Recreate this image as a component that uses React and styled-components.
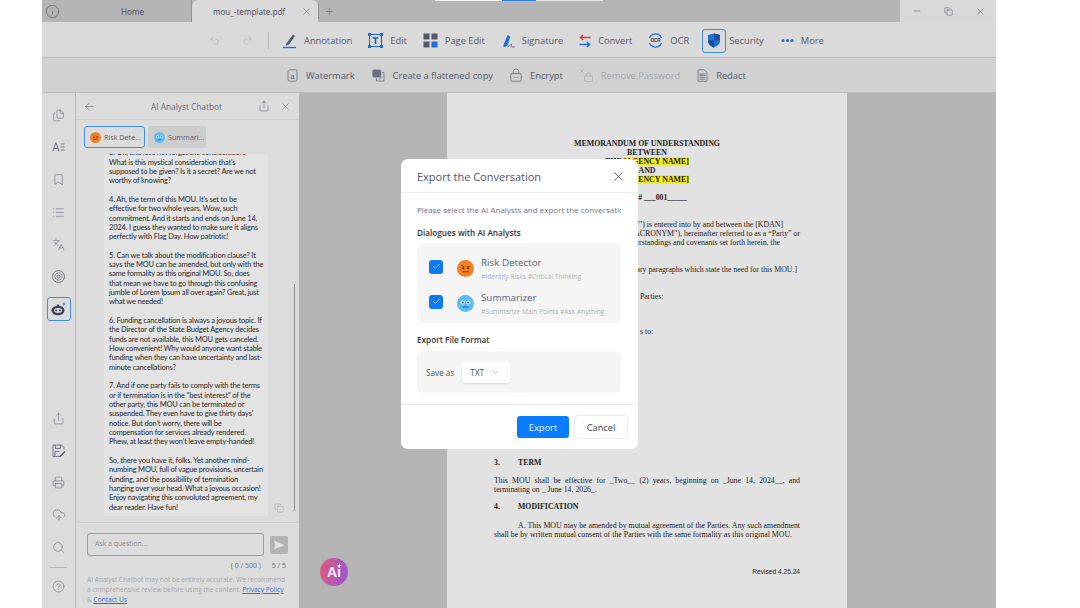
import React from "react";
import styled, { createGlobalStyle } from "styled-components";
import {
  Undo2, Redo2, X, Plus, Minus, Copy, Files, List, Bookmark, Languages, Share, Printer,
  CloudUpload, Search, CircleHelp, ArrowLeft, ChevronDown, Check, Info,
} from "lucide-react";

const GlobalStyle = createGlobalStyle`
  html, body { margin: 0; padding: 0; background: #fff; }
  body { font-family: "Open Sans", "Noto Sans", sans-serif; overflow: hidden; }
  * { box-sizing: border-box; }
`;

const BLUE = "#1f6fd8";

const AnnotationIcon = () => (
  <svg width="15" height="16" viewBox="0 0 15 16">
    <path d="M4 11 L11 1.5 L13 3 L7 11.5 L4 12.5 Z" fill="#54586e" />
    <path d="M1 14.5 H14" stroke={BLUE} strokeWidth="1.4" />
  </svg>
);
const EditIcon = () => (
  <svg width="15" height="15" viewBox="0 0 15 15">
    <rect x="1.5" y="1.5" width="12" height="12" fill="none" stroke={BLUE} strokeWidth="1.1" />
    <rect x="0" y="0" width="3" height="3" fill={BLUE} />
    <rect x="12" y="0" width="3" height="3" fill={BLUE} />
    <rect x="0" y="12" width="3" height="3" fill={BLUE} />
    <rect x="12" y="12" width="3" height="3" fill={BLUE} />
    <path d="M4.5 4.2 H10.5 V5.6 H8.3 V11 H6.7 V5.6 H4.5 Z" fill="#1d4f96" />
  </svg>
);
const PageEditIcon = () => (
  <svg width="15" height="15" viewBox="0 0 15 15">
    <rect x="0.5" y="0.5" width="6" height="6" fill="#54586e" />
    <rect x="8.5" y="0.5" width="6" height="6" fill="#54586e" />
    <rect x="0.5" y="8.5" width="6" height="6" fill="#54586e" />
    <rect x="8.5" y="8.5" width="6" height="6" fill={BLUE} />
  </svg>
);
const SignatureIcon = () => (
  <svg width="12" height="14" viewBox="0 0 12 14">
    <path d="M0.5 11 L4.5 1 L7.3 2.5 L4.3 12 L0.5 13.2 Z" fill={BLUE} />
    <path d="M4.5 13 C7 12.5 7.5 9 8.3 10 C9 11 7.5 13 8.8 13 H11.8" fill="none" stroke="#54586e" strokeWidth="0.8" />
  </svg>
);
const ConvertIcon = () => (
  <svg width="12" height="14" viewBox="0 0 12 14">
    <path d="M11.5 3.5 H2 M4 1 L1.5 3.5 L4 6" fill="none" stroke="#d8413b" strokeWidth="1.5" />
    <path d="M0.5 10.5 H10 M8 8 L10.5 10.5 L8 13" fill="none" stroke={BLUE} strokeWidth="1.5" />
  </svg>
);
const OcrIcon = () => (
  <svg width="15" height="15" viewBox="0 0 15 15">
    <circle cx="7.5" cy="7.5" r="6.6" fill="none" stroke={BLUE} strokeWidth="1.3" />
    <rect x="0" y="5" width="15" height="5" fill="#dadada" />
    <text x="7.5" y="9.4" fontSize="4.6" textAnchor="middle" fill="#333" fontFamily="Liberation Sans, sans-serif" fontWeight="700">OCR</text>
  </svg>
);
const ShieldIcon = () => (
  <svg width="14" height="15" viewBox="0 0 14 15">
    <path d="M1 2 L7 0.5 L13 2 V8 C13 11 10 13.5 7 14.5 C4 13.5 1 11 1 8 Z" fill={BLUE} />
    <path d="M7 0.5 L13 2 V7.5 H7 Z M1 7.5 H7 V14.5 C4 13.5 1 11 1 8 Z" fill="#1d4f96" />
  </svg>
);
const DotsIcon = () => (
  <svg width="13" height="5" viewBox="0 0 13 5">
    <circle cx="2" cy="2.5" r="1.6" fill={BLUE} />
    <circle cx="6.5" cy="2.5" r="1.6" fill={BLUE} />
    <circle cx="11" cy="2.5" r="1.6" fill={BLUE} />
  </svg>
);

const Stroke = ({ w = 12, h = 13, children }) => (
  <svg width={w} height={h} viewBox={`0 0 ${w} ${h}`} fill="none" stroke="#6a6d80" strokeWidth="0.8">
    {children}
  </svg>
);
const WatermarkIcon = () => (
  <Stroke w={11} h={13}>
    <path d="M1 2.5 L2.5 0.8 H8.5 Q10 0.8 10 2.5 V10.5 Q10 12.2 8.5 12.2 H2.5 Q1 12.2 1 10.5 Z" />
    <text x="5.5" y="9.5" fontSize="7" textAnchor="middle" fill="#54586e" stroke="none" fontFamily="Liberation Sans, sans-serif">a</text>
  </Stroke>
);
const FlattenIcon = () => (
  <Stroke w={13} h={13}>
    <rect x="0.8" y="1" width="8" height="7" rx="1" fill="#6a6d80" />
    <path d="M10 3.5 H12 V12 H4.5 V9.5" />
    <path d="M7 10.5 L10 7.5" />
  </Stroke>
);
const LockIcon = () => (
  <Stroke w={12} h={14}>
    <rect x="0.8" y="5.5" width="10.4" height="7.8" rx="1.2" />
    <path d="M3.2 5.5 V3.5 Q3.2 1 6 1 Q8.8 1 8.8 3.5 V5.5" />
    <path d="M3.7 9.5 H4.7 M5.5 9.5 H6.5 M7.3 9.5 H8.3" />
  </Stroke>
);
const RemoveLockIcon = () => (
  <svg width="13" height="13" viewBox="0 0 13 13" fill="none" stroke="#aaabb2" strokeWidth="0.8">
    <path d="M0.5 0.5 L3.5 3.5 M3.5 0.5 L0.5 3.5" />
    <rect x="4.5" y="7" width="8" height="5.5" rx="1" />
    <path d="M6.5 7 V5.5 Q6.5 3.8 8.5 3.8 Q10.5 3.8 10.5 5.5 V7" />
  </svg>
);
const RedactIcon = () => (
  <Stroke w={11} h={13}>
    <path d="M1 1.5 Q1 0.7 1.8 0.7 H7 L10 3.7 V11.5 Q10 12.3 9.2 12.3 H1.8 Q1 12.3 1 11.5 Z" />
    <path d="M2.5 5 H8.5 M2.5 6.5 H8.5 M2.5 8.3 H8.5 M2.5 10.2 H8.5" />
  </Stroke>
);
const TextListIcon = () => (
  <svg width="13" height="12" viewBox="0 0 15 13" fill="none" stroke="#54586e" strokeWidth="0.9">
    <path d="M0.8 11.5 L4.5 1.5 L8.2 11.5 M2 8.3 H7" />
    <path d="M10 3 H14.5 M10 6.5 H14.5 M10 10 H14.5" />
  </svg>
);
const TargetIcon = () => (
  <svg width="13" height="13" viewBox="0 0 13 13" fill="none" stroke="#6a6d80" strokeWidth="0.9">
    <circle cx="6.5" cy="6.5" r="6" />
    <circle cx="6.5" cy="6.5" r="3.6" strokeDasharray="2 0.8" />
    <circle cx="6.5" cy="6.5" r="1.4" />
  </svg>
);
const BotIcon = () => (
  <svg width="16" height="15" viewBox="0 0 16 15">
    <ellipse cx="7" cy="9.5" rx="6.5" ry="4.8" fill="#3d4256" />
    <circle cx="7" cy="4.2" r="1" fill="#3d4256" />
    <path d="M7 4.5 V6" stroke="#3d4256" />
    <ellipse cx="7" cy="9.5" rx="4" ry="2.4" fill="#dcdcdc" />
    <circle cx="5.2" cy="9.4" r="0.9" fill="#3d4256" />
    <circle cx="8.8" cy="9.4" r="0.9" fill="#3d4256" />
    <path d="M13 1 L13.5 2.5 L15 3 L13.5 3.5 L13 5 L12.5 3.5 L11 3 L12.5 2.5 Z" fill={BLUE} />
  </svg>
);
const SaveEditIcon = () => (
  <svg width="14" height="14" viewBox="0 0 14 14" fill="none" stroke="#6a6d80" strokeWidth="0.9">
    <path d="M9 12.5 H1 V1 H9.5 L12 3.5 V5.5" />
    <path d="M3.5 1 V4.5 H8.5 V1 M3 12.5 V7.5 H7.5" />
    <path d="M8 12.5 L13 7.5" strokeWidth="1.4" stroke="#54586e" />
  </svg>
);
const SendIcon = () => (
  <svg width="12" height="10" viewBox="0 0 12 10">
    <path d="M0.5 0.5 L11.5 5 L0.5 9.5 L2.5 5 Z" fill="#e4e4e4" />
  </svg>
);
const RiskFace = ({ size }) => (
  <svg width={size} height={size} viewBox="0 0 18 18">
    <circle cx="9" cy="9" r="9" fill="#f58023" />
    <path d="M4.5 5.5 L8 7.5 M13.5 7 L10.2 7.5" stroke="#6a3b16" strokeWidth="1" />
    <circle cx="6.5" cy="8.8" r="1.1" fill="#5a3a22" />
    <circle cx="11.7" cy="8.8" r="1.1" fill="#5a3a22" />
    <path d="M5.5 12.5 H12.5" stroke="#6a3b16" strokeWidth="1" />
  </svg>
);
const SummaryFace = ({ size }) => (
  <svg width={size} height={size} viewBox="0 0 18 18">
    <circle cx="9" cy="9" r="9" fill="#58bdf2" />
    <circle cx="6" cy="8" r="2.1" fill="#e8f6fd" />
    <circle cx="12" cy="8" r="2.1" fill="#e8f6fd" />
    <circle cx="6.2" cy="8" r="1" fill="#27415a" />
    <circle cx="11.8" cy="8" r="1" fill="#27415a" />
    <path d="M6 12.7 H12" stroke="#27415a" strokeWidth="0.9" />
  </svg>
);

const Window = styled.div`
  position: relative;
  width: 954px;
  height: 608px;
  margin-left: 42px;
  overflow: hidden;
  display: flex;
  flex-direction: column;
  background: #dadada;
  color: #54586e;
`;
const TopStrip = styled.div`
  position: absolute;
  top: 0;
  left: 393px;
  width: 168px;
  height: 1px;
  background: linear-gradient(to right, #f2f2f2 0 67px, #2d7fe0 67px 101px, #e9e9e9 101px);
`;
const TabBar = styled.div`
  height: 22px;
  flex: none;
  display: flex;
  background: #b5b5b5;
`;
const InfoSlot = styled.div`
  width: 20px;
  display: flex;
  align-items: center;
  justify-content: center;
  color: #4d5166;
`;
const Tab = styled.div`
  width: ${(p) => p.$width}px;
  height: 22px;
  flex: none;
  display: flex;
  align-items: center;
  justify-content: ${(p) => (p.$active ? "flex-start" : "center")};
  padding-left: ${(p) => (p.$active ? 21 : 12)}px;
  font-size: 8.1px;
  white-space: nowrap;
  color: #45495c;
  background: ${(p) => (p.$active ? "#dadada" : "transparent")};
  border-radius: ${(p) => (p.$active ? "6px 6px 0 0" : "0")};
  border-right: ${(p) => (p.$active ? "none" : "1px solid #8f8f8f")};
  svg { margin-left: 16px; flex: none; }
`;
const AddTab = styled.div`
  padding-left: 5px;
  height: 15px;
  align-self: center;
  border-left: 1px solid #8f8f8f;
  display: flex;
  align-items: center;
  color: #5a5e70;
`;
const WindowControls = styled.div`
  margin-left: auto;
  width: 96px;
  background: #d9d9d9;
  display: flex;
  align-items: center;
  justify-content: space-between;
  color: #45495c;
  padding: 0 10px 0 12px;
`;
const ToolBar = styled.div`
  height: 36px;
  flex: none;
  display: flex;
  align-items: center;
  padding: 2px 0 0 167px;
  background: #dadada;
  border-bottom: 1px solid #bcbcbc;
`;
const HistoryButton = styled.span`
  display: flex;
  width: 33px;
  color: #a2a3aa;
`;
const ToolSep = styled.span`
  width: 1px;
  height: 17px;
  background: #bdbdbd;
  margin: 0 13px 0 -7px;
`;
const Tool = styled.div`
  display: flex;
  align-items: center;
  gap: 7px;
  margin-right: ${(p) => p.$after}px;
  font-size: 9.3px;
  white-space: nowrap;
  color: #54586e;
`;
const ToolIcon = styled.span`
  display: flex;
  align-items: center;
  justify-content: center;
  ${(p) => p.$active && `
    width: 24px;
    height: 24px;
    border: 1px solid #3f8fe8;
    border-radius: 3px;
    margin-right: -4px;
  `}
`;
const SubBar = styled.div`
  height: 35px;
  flex: none;
  display: flex;
  align-items: center;
  padding-left: 245px;
  gap: 17px;
  background: #d1d1d1;
  border-bottom: 1px solid #bcbcbc;
`;
const SubTool = styled.div`
  display: flex;
  align-items: center;
  gap: 8px;
  font-size: 9.3px;
  white-space: nowrap;
  color: ${(p) => (p.$disabled ? "#a6a7ae" : "#54586e")};
`;
const Workspace = styled.div`
  flex: 1;
  min-height: 0;
  display: flex;
`;
const SideRail = styled.div`
  width: 34px;
  flex: none;
  display: flex;
  flex-direction: column;
  align-items: center;
  padding: 6px 0 5px;
  background: #dcdcdc;
  border-right: 1px solid #bdbdbd;
  color: #5e6175;
`;
const RailButton = styled.div`
  width: 24px;
  height: ${(p) => (p.$active ? 24 : 32.3)}px;
  margin: ${(p) => (p.$active ? "4px 0" : "0")};
  display: flex;
  align-items: center;
  justify-content: center;
  border: ${(p) => (p.$active ? "1px solid #3f8fe8" : "none")};
  border-radius: 3px;
`;
const RailSpacer = styled.div`
  flex: 1;
`;
const RailDivider = styled.div`
  width: 17px;
  height: 1px;
  background: #b5b5b5;
  margin: 3px 0;
`;
const ChatPanel = styled.div`
  width: 223px;
  flex: none;
  display: flex;
  flex-direction: column;
  background: #dcdcdc;
`;
const ChatHeader = styled.div`
  height: 27px;
  flex: none;
  display: flex;
  align-items: center;
  padding: 0 8px 0 7px;
  border-bottom: 1px solid #cdcdcd;
`;
const ChatTitle = styled.div`
  flex: 1;
  text-align: center;
  font-size: 8.3px;
  color: #66697a;
  padding-left: 19px;
`;
const HeaderAction = styled.span`
  display: flex;
  margin-left: ${(p) => p.$gap || 0}px;
  color: #54586e;
`;
const AnalystTabs = styled.div`
  flex: none;
  display: flex;
  gap: 3px;
  padding: 6px 0 6px 8px;
`;
const AnalystTab = styled.div`
  height: 22px;
  width: ${(p) => p.$width}px;
  display: flex;
  align-items: center;
  gap: 3px;
  padding-left: 5px;
  font-size: 7.2px;
  white-space: nowrap;
  overflow: hidden;
  color: #5d6072;
  border-radius: 3px;
  background: ${(p) => (p.$active ? "#dcdcdc" : "#cdcdcd")};
  border: ${(p) => (p.$active ? "1px solid #3f8fe8" : "1px solid #cdcdcd")};
`;
const Messages = styled.div`
  position: relative;
  height: 362px;
  flex: none;
  display: flex;
  flex-direction: column;
  justify-content: flex-end;
  overflow: hidden;
  padding-left: 28px;
`;
const Bubble = styled.div`
  width: 164px;
  flex: none;
  background: #e3e3e3;
  padding: 0 0 4px 5px;
  font-family: "Lato", "Open Sans", sans-serif;
  font-size: 7.5px;
  letter-spacing: -0.18px;
  line-height: 9.33px;
  color: #2a2a2a;
`;
const MsgLine = styled.div`
  white-space: nowrap;
  min-height: 9.33px;
`;
const ScrollThumb = styled.div`
  position: absolute;
  right: 4px;
  top: 130px;
  bottom: 5px;
  width: 1.5px;
  background: #8b8b8b;
`;
const CopyButton = styled.span`
  position: absolute;
  left: 198px;
  bottom: 3px;
  display: flex;
  color: #8b8e9b;
`;
const Composer = styled.div`
  flex: 1;
  margin-top: 6px;
  border-top: 1px solid #cdcdcd;
  padding: 10px 10px 0 11px;
`;
const InputRow = styled.div`
  display: flex;
  align-items: center;
  gap: 6px;
`;
const AskInput = styled.div`
  width: 177px;
  height: 23px;
  border: 1px solid #9a9a9a;
  border-radius: 3px;
  padding: 5px 7px;
  font-size: 6.9px;
  color: #85878f;
`;
const SendButton = styled.div`
  width: 18px;
  height: 18px;
  border-radius: 2px;
  background: #b3b3b3;
  display: flex;
  align-items: center;
  justify-content: center;
`;
const Counter = styled.div`
  display: flex;
  justify-content: flex-end;
  gap: 11px;
  margin: 5px 3px 0 0;
  font-size: 7px;
  color: #6c6e78;
`;
const Disclaimer = styled.div`
  margin-top: 5px;
  font-size: 6.6px;
  line-height: 10px;
  white-space: nowrap;
  color: #a4a5aa;
  a { color: #1c74de; text-decoration: underline; }
`;
const DocArea = styled.div`
  flex: 1;
  display: flex;
  justify-content: center;
  padding-right: 1px;
  background: #b5b5b5;
`;
const Page = styled.div`
  width: 400px;
  height: 100%;
  background: #e2e2e2;
  padding: 46px 47px 0 47px;
  font-family: "Liberation Serif", serif;
  font-size: 7.8px;
  line-height: 9.3px;
  color: #222;
`;
const DocTitle = styled.div`
  text-align: center;
  font-size: 7.9px;
  font-weight: 700;
  line-height: 9.1px;
`;
const Mark = styled.span`
  background: #f0ee1e;
`;
const DocLine = styled.div`
  white-space: nowrap;
  margin-top: ${(p) => p.$top || 0}px;
  text-align: ${(p) => p.$align || "left"};
  padding-left: ${(p) => p.$indent || 0}px;
  padding-right: ${(p) => p.$endPad || 0}px;
  font-weight: ${(p) => (p.$bold ? 700 : 400)};
`;
const DocJustified = styled.div`
  text-align: justify;
  text-align-last: justify;
  margin-top: ${(p) => p.$top || 0}px;
  padding-right: ${(p) => p.$endPad || 0}px;
  text-indent: ${(p) => p.$indent || 0}px;
`;
const SectionHead = styled(DocLine)`
  display: flex;
  font-weight: 700;
  span { width: 24px; }
`;
const Revised = styled.div`
  margin-top: 28px;
  text-align: right;
  font-family: "Liberation Sans", sans-serif;
  font-size: 6.6px;
`;
const AiBadge = styled.div`
  position: absolute;
  left: 278px;
  top: 558px;
  width: 28px;
  height: 28px;
  border-radius: 50%;
  background: linear-gradient(100deg, #e05a78, #9357d8);
  color: #f5eef5;
  font-family: "Liberation Sans", sans-serif;
  font-size: 14px;
  font-weight: 700;
  display: flex;
  align-items: center;
  justify-content: center;
  svg { position: absolute; left: 17px; top: 5px; }
`;
const Dialog = styled.div`
  position: absolute;
  left: 359px;
  top: 159px;
  width: 237px;
  height: 290px;
  background: #fff;
  border-radius: 7px;
  display: flex;
  flex-direction: column;
  color: #50536e;
`;
const DialogHead = styled.div`
  height: 34px;
  flex: none;
  display: flex;
  align-items: center;
  justify-content: space-between;
  padding: 2px 12px 0 16px;
  font-size: 11px;
  font-weight: 500;
  border-bottom: 1px solid #ececec;
  svg { color: #333; }
`;
const DialogBody = styled.div`
  flex: 1;
  padding: 11px 17px 0 16px;
`;
const Lead = styled.div`
  font-size: 8px;
  line-height: 11px;
  white-space: nowrap;
  overflow: hidden;
  color: #6f7290;
`;
const FieldLabel = styled.div`
  margin-top: ${(p) => p.$top}px;
  font-size: 8.2px;
  line-height: 11px;
  font-weight: 600;
  color: #333;
`;
const Panel = styled.div`
  margin-top: 5px;
  border-radius: 6px;
  background: #f5f5f5;
`;
const AnalystPanel = styled(Panel)`
  height: 80px;
  padding: 13px 0 0 12px;
  display: flex;
  flex-direction: column;
  gap: 9px;
`;
const AnalystRow = styled.div`
  display: flex;
  align-items: center;
  height: 26px;
`;
const CheckBox = styled.div`
  width: 14px;
  height: 14px;
  margin: 0 14px 5px 0;
  border-radius: 3px;
  background: #0f7af0;
  color: #fff;
  display: flex;
  align-items: center;
  justify-content: center;
`;
const AvatarSlot = styled.span`
  display: flex;
  margin: 0 8px 2px 0;
`;
const AnalystName = styled.div`
  font-size: 9.8px;
  line-height: 13px;
  font-weight: 500;
  margin-left: -1px;
  color: #5b5e78;
`;
const AnalystTags = styled.div`
  margin: 2px 0 0 -1px;
  font-size: 6.65px;
  line-height: 11px;
  white-space: nowrap;
  color: #b0b0b4;
`;
const FormatPanel = styled(Panel)`
  height: 42px;
  margin-top: 6px;
  display: flex;
  align-items: center;
  padding-left: 9px;
  gap: 8px;
  font-size: 8.2px;
  color: #555;
`;
const Select = styled.div`
  width: 48px;
  height: 21px;
  background: #fff;
  border-radius: 3px;
  box-shadow: 0 1px 2px rgba(0, 0, 0, 0.12);
  display: flex;
  align-items: center;
  justify-content: space-between;
  padding: 0 10px 0 8px;
  color: #555;
`;
const DialogFoot = styled.div`
  height: 45px;
  flex: none;
  display: flex;
  align-items: flex-start;
  justify-content: flex-end;
  gap: 6px;
  padding: 11px 11px 0 0;
  border-top: 1px solid #ececec;
`;
const FootButton = styled.div`
  width: 52px;
  height: 22px;
  border-radius: 3px;
  display: flex;
  align-items: center;
  justify-content: center;
  font-size: 9.3px;
  background: ${(p) => (p.$primary ? "#0a7cff" : "#fff")};
  color: ${(p) => (p.$primary ? "#eaf4ff" : "#444")};
  box-shadow: ${(p) => (p.$primary ? "none" : "0 0 2px rgba(0,0,0,0.25)")};
`;

const TOOLS = [
  { label: "Annotation", icon: <AnnotationIcon />, after: 16 },
  { label: "Edit", icon: <EditIcon />, after: 16 },
  { label: "Page Edit", icon: <PageEditIcon />, after: 18 },
  { label: "Signature", icon: <SignatureIcon />, after: 16 },
  { label: "Convert", icon: <ConvertIcon />, after: 16 },
  { label: "OCR", icon: <OcrIcon />, after: 13 },
  { label: "Security", icon: <ShieldIcon />, active: true, after: 17 },
  { label: "More", icon: <DotsIcon />, after: 0 },
];

const MESSAGE = [
  "3. Oh, and let's not forget the consideration.",
  "What is this mystical consideration that's",
  "supposed to be given? Is it a secret? Are we not",
  "worthy of knowing?",
  "",
  "4. Ah, the term of this MOU. It's set to be",
  "effective for two whole years. Wow, such",
  "commitment. And it starts and ends on June 14,",
  "2024. I guess they wanted to make sure it aligns",
  "perfectly with Flag Day. How patriotic!",
  "",
  "5. Can we talk about the modification clause? It",
  "says the MOU can be amended, but only with the",
  "same formality as this original MOU. So, does",
  "that mean we have to go through this confusing",
  "jumble of Lorem Ipsum all over again? Great, just",
  "what we needed!",
  "",
  "6. Funding cancellation is always a joyous topic. If",
  "the Director of the State Budget Agency decides",
  "funds are not available, this MOU gets canceled.",
  "How convenient! Why would anyone want stable",
  "funding when they can have uncertainty and last-",
  "minute cancellations?",
  "",
  "7. And if one party fails to comply with the terms",
  "or if termination is in the \"best interest\" of the",
  "other party, this MOU can be terminated or",
  "suspended. They even have to give thirty days'",
  "notice. But don't worry, there will be",
  "compensation for services already rendered.",
  "Phew, at least they won't leave empty-handed!",
  "",
  "So, there you have it, folks. Yet another mind-",
  "numbing MOU, full of vague provisions, uncertain",
  "funding, and the possibility of termination",
  "hanging over your head. What a joyous occasion!",
  "Enjoy navigating this convoluted agreement, my",
  "dear reader. Have fun!",
];

export default function App() {
  return (
    <>
      <GlobalStyle />
      <Window>
        <TopStrip />
        <TabBar>
          <InfoSlot><Info size={15} strokeWidth={1} /></InfoSlot>
          <Tab $width={130}>Home</Tab>
          <Tab $width={126} $active>
            mou_-template.pdf
            <X size={11} strokeWidth={1} />
          </Tab>
          <AddTab><Plus size={11} strokeWidth={1.1} /></AddTab>
          <WindowControls>
            <Minus size={10} strokeWidth={1.2} />
            <Copy size={9} strokeWidth={1.2} />
            <X size={11} strokeWidth={1.1} />
          </WindowControls>
        </TabBar>

        <ToolBar>
          <HistoryButton><Undo2 size={11} strokeWidth={1} /></HistoryButton>
          <HistoryButton><Redo2 size={11} strokeWidth={1} /></HistoryButton>
          <ToolSep />
          {TOOLS.map((tool) => (
            <Tool key={tool.label} $after={tool.after}>
              <ToolIcon $active={tool.active}>{tool.icon}</ToolIcon>
              {tool.label}
            </Tool>
          ))}
        </ToolBar>

        <SubBar>
          <SubTool><WatermarkIcon />Watermark</SubTool>
          <SubTool><FlattenIcon />Create a flattened copy</SubTool>
          <SubTool><LockIcon />Encrypt</SubTool>
          <SubTool $disabled><RemoveLockIcon />Remove Password</SubTool>
          <SubTool><RedactIcon />Redact</SubTool>
        </SubBar>

        <Workspace>
          <SideRail>
            <RailButton><Files size={13} strokeWidth={1} /></RailButton>
            <RailButton><TextListIcon /></RailButton>
            <RailButton><Bookmark size={13} strokeWidth={1} /></RailButton>
            <RailButton><List size={13} strokeWidth={1} /></RailButton>
            <RailButton><Languages size={13} strokeWidth={1} /></RailButton>
            <RailButton><TargetIcon /></RailButton>
            <RailButton $active><BotIcon /></RailButton>
            <RailSpacer />
            <RailButton><Share size={13} strokeWidth={1} /></RailButton>
            <RailButton><SaveEditIcon /></RailButton>
            <RailButton><Printer size={13} strokeWidth={1} /></RailButton>
            <RailButton><CloudUpload size={14} strokeWidth={1} /></RailButton>
            <RailButton><Search size={13} strokeWidth={1} /></RailButton>
            <RailDivider />
            <RailButton><CircleHelp size={13} strokeWidth={1} /></RailButton>
          </SideRail>

          <ChatPanel>
            <ChatHeader>
              <ArrowLeft size={13} strokeWidth={1} />
              <ChatTitle>AI Analyst Chatbot</ChatTitle>
              <HeaderAction><Share size={12} strokeWidth={1} /></HeaderAction>
              <HeaderAction $gap={10}><X size={11} strokeWidth={1.1} /></HeaderAction>
            </ChatHeader>
            <AnalystTabs>
              <AnalystTab $width={61} $active><RiskFace size={11} />Risk Dete...</AnalystTab>
              <AnalystTab $width={58}><SummaryFace size={11} />Summari...</AnalystTab>
            </AnalystTabs>
            <Messages>
              <Bubble>
                {MESSAGE.map((line, i) => <MsgLine key={i}>{line}</MsgLine>)}
              </Bubble>
              <ScrollThumb />
              <CopyButton><Copy size={10} strokeWidth={1} /></CopyButton>
            </Messages>
            <Composer>
              <InputRow>
                <AskInput>Ask a question...</AskInput>
                <SendButton><SendIcon /></SendButton>
              </InputRow>
              <Counter><span>( 0 / 500 )</span><span>5 / 5</span></Counter>
              <Disclaimer>
                AI Analyst Chatbot may not be entirely accurate. We recommend<br />
                a comprehensive review before using the content. <a>Privacy Policy</a><br />
                &amp; <a>Contact Us</a>
              </Disclaimer>
            </Composer>
          </ChatPanel>

          <DocArea>
            <Page>
              <DocTitle>
                MEMORANDUM OF UNDERSTANDING<br />
                BETWEEN<br />
                THE <Mark>[AGENCY NAME]</Mark><br />
                AND<br />
                THE <Mark>[AGENCY NAME]</Mark>
              </DocTitle>
              <DocLine $top={9} $bold $align="center" $indent={10}>MOU # ___001_____</DocLine>
              <DocLine $top={17} $align="right" $endPad={17}>This Memorandum of Understanding (“MOU”) is entered into by and between the [KDAN]</DocLine>
              <DocLine $align="right">[AGENCY NAME] (“ACRONYM”), hereinafter referred to as a “Party” or</DocLine>
              <DocLine $align="right" $endPad={20}>In consideration of the mutual understandings and covenants set forth herein, the</DocLine>
              <DocLine $top={17} $align="right" $endPad={3}>[Insert any preliminary paragraphs which state the need for this MOU.]</DocLine>
              <DocLine $top={18} $indent={146}>Parties:</DocLine>
              <DocLine $top={26} $indent={146}>s to:</DocLine>
              <SectionHead $top={121}><span>3.</span>TERM</SectionHead>
              <DocJustified $top={9}>This MOU shall be effective for _Two__ (2) years, beginning on _June 14, 2024__, and</DocJustified>
              <DocLine>terminating on _ June 14, 2026_.</DocLine>
              <SectionHead $top={8}><span>4.</span>MODIFICATION</SectionHead>
              <DocJustified $top={9} $indent={24}>A. This MOU may be amended by mutual agreement of the Parties. Any such amendment</DocJustified>
              <DocJustified $endPad={8}>shall be by written mutual consent of the Parties with the same formality as this original MOU.</DocJustified>
              <Revised>Revised 4.26.24</Revised>
            </Page>
          </DocArea>
        </Workspace>

        <AiBadge>
          Ai
          <svg width="5" height="5" viewBox="0 0 6 6">
            <path d="M3 0 L3.7 2.3 L6 3 L3.7 3.7 L3 6 L2.3 3.7 L0 3 L2.3 2.3 Z" fill="#fff" />
          </svg>
        </AiBadge>

        <Dialog>
          <DialogHead>
            Export the Conversation
            <X size={15} strokeWidth={1.1} />
          </DialogHead>
          <DialogBody>
            <Lead>Please select the AI Analysts and export the conversation</Lead>
            <FieldLabel $top={12}>Dialogues with AI Analysts</FieldLabel>
            <AnalystPanel>
              <AnalystRow>
                <CheckBox><Check size={9} strokeWidth={1.5} /></CheckBox>
                <AvatarSlot><RiskFace size={17} /></AvatarSlot>
                <div>
                  <AnalystName>Risk Detector</AnalystName>
                  <AnalystTags>#Identify Risks #Critical Thinking</AnalystTags>
                </div>
              </AnalystRow>
              <AnalystRow>
                <CheckBox><Check size={9} strokeWidth={1.5} /></CheckBox>
                <AvatarSlot><SummaryFace size={17} /></AvatarSlot>
                <div>
                  <AnalystName>Summarizer</AnalystName>
                  <AnalystTags>#Summarize Main Points #Ask Anything</AnalystTags>
                </div>
              </AnalystRow>
            </AnalystPanel>
            <FieldLabel $top={11}>Export File Format</FieldLabel>
            <FormatPanel>
              Save as
              <Select>TXT<ChevronDown size={9} strokeWidth={1} /></Select>
            </FormatPanel>
          </DialogBody>
          <DialogFoot>
            <FootButton $primary>Export</FootButton>
            <FootButton>Cancel</FootButton>
          </DialogFoot>
        </Dialog>
      </Window>
    </>
  );
}
